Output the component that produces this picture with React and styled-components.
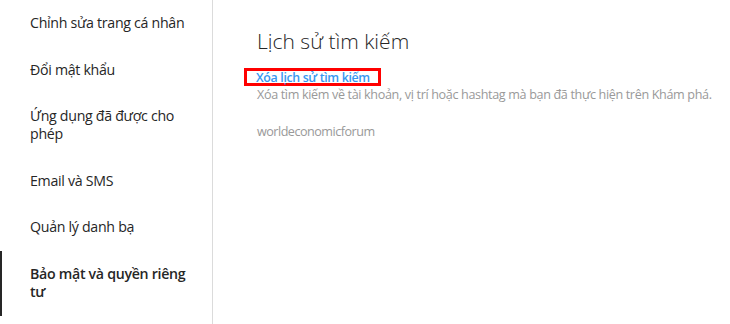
import React from 'react';
import styled, { createGlobalStyle } from 'styled-components';

const GlobalStyle = createGlobalStyle`
  html, body {
    margin: 0;
    padding: 0;
    background: #ffffff;
  }
  body {
    font-family: "Open Sans", "Noto Sans", Arial, sans-serif;
    color: #262626;
  }
`;

const Page = styled.div`
  display: flex;
  width: 730px;
  height: 324px;
  overflow: hidden;
  background: #ffffff;
`;

const Sidebar = styled.nav`
  display: flex;
  flex-direction: column;
  width: 212px;
  flex-shrink: 0;
  border-right: 1px solid #dbdbdb;
`;

const MenuItem = styled.div`
  padding: 14px 16px 14.6px 28px;
  border-left: 2px solid ${(p) => (p.$active ? '#262626' : 'transparent')};
  font-size: 14.2px;
  line-height: 18px;
  letter-spacing: -0.3px;
  font-weight: ${(p) => (p.$active ? 600 : 400)};
  color: #262626;
`;

const Main = styled.main`
  display: flex;
  flex-direction: column;
  align-items: flex-start;
  padding: 28px 12px 0 44px;
`;

const Title = styled.h1`
  margin: 0;
  font-size: 21px;
  line-height: 26px;
  font-weight: 300;
  color: #262626;
`;

const LinkFrame = styled.div`
  margin: 14px 0 0 -13px;
  padding: 0 8px 0 9px;
  height: 12px;
  border: 3px solid #ff0000;
  display: flex;
  align-items: center;
`;

const ClearLink = styled.a`
  font-size: 12.4px;
  line-height: 14px;
  font-weight: 600;
  letter-spacing: -0.35px;
  color: #3897f0;
  text-decoration: none;
  white-space: nowrap;
  transform: translateY(1px);
`;

const Hint = styled.p`
  margin: 0;
  font-size: 12.6px;
  line-height: 18px;
  letter-spacing: -0.35px;
  color: #999999;
  white-space: nowrap;
`;

const SearchEntry = styled.div`
  margin-top: 19px;
  font-size: 12.6px;
  line-height: 18px;
  letter-spacing: -0.5px;
  color: #999999;
`;

const items = [
  'Chỉnh sửa trang cá nhân',
  'Đổi mật khẩu',
  'Ứng dụng đã được cho phép',
  'Email và SMS',
  'Quản lý danh bạ',
  'Bảo mật và quyền riêng tư',
];

export default function App() {
  return (
    <Page>
      <GlobalStyle />
      <Sidebar>
        {items.map((label, i) => (
          <MenuItem key={label} $active={i === items.length - 1}>
            {label}
          </MenuItem>
        ))}
      </Sidebar>
      <Main>
        <Title>Lịch sử tìm kiếm</Title>
        <LinkFrame>
          <ClearLink href="#">Xóa lịch sử tìm kiếm</ClearLink>
        </LinkFrame>
        <Hint>Xóa tìm kiếm về tài khoản, vị trí hoặc hashtag mà bạn đã thực hiện trên Khám phá.</Hint>
        <SearchEntry>worldeconomicforum</SearchEntry>
      </Main>
    </Page>
  );
}
